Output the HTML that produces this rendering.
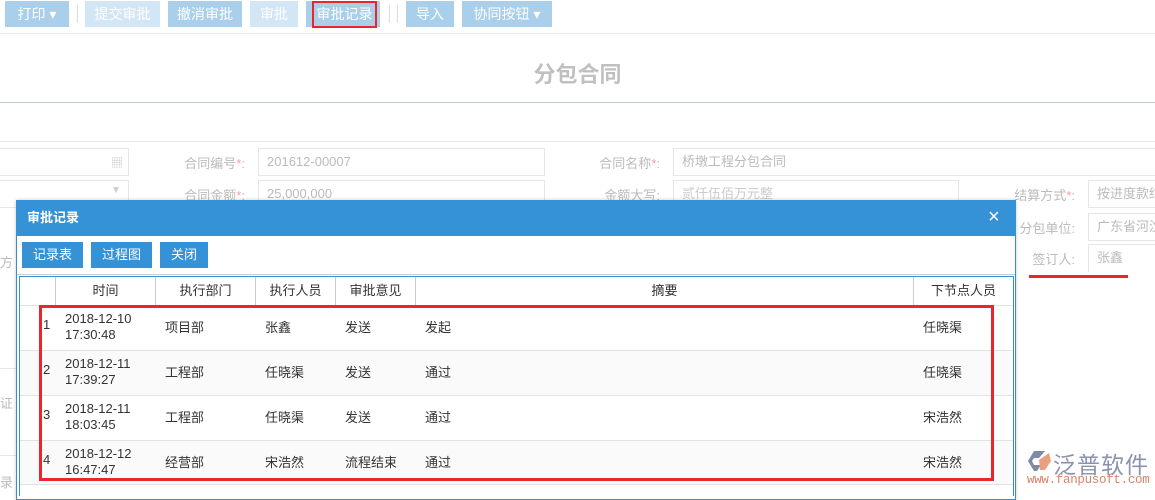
<!DOCTYPE html>
<html><head><meta charset="utf-8"><style>
*{box-sizing:border-box;margin:0;padding:0}
body{width:1155px;height:494px;overflow:hidden;background:#fff;font-family:"Liberation Sans","Noto Sans CJK SC",sans-serif;font-size:13px;color:#333;position:relative}
.a{position:absolute}
.tb{position:absolute;top:1px;height:26px;line-height:26px;color:#fff;font-size:14px;text-align:center}
.inp{position:absolute;border:1px solid #e6e6e6;height:28px;line-height:26px;padding-left:8px;color:#bbb;font-size:13px}
.lbl{position:absolute;color:#bbb;font-size:13px;text-align:right}
.lbl i{color:#f3a0a0;font-style:normal}
.btn{position:absolute;top:242px;height:26px;line-height:26px;background:#3592d6;color:#fff;text-align:center;font-size:13px}
.th{position:absolute;top:277px;height:28px;line-height:28px;text-align:center;border-left:1px solid #ccc;color:#333}
.row{position:absolute;left:20px;width:993px;height:45px;border-top:1px solid #e2e2e2}
.c{position:absolute;font-size:13px;color:#333}
</style></head><body>
<div class="tb" style="left:5px;width:64px;background:#a9cfea">打印 ▾</div>
<div class="a" style="left:77px;top:5px;width:1px;height:18px;background:#ddd"></div>
<div class="tb" style="left:85px;width:75px;background:#d3e6f5">提交审批</div>
<div class="tb" style="left:168px;width:74px;background:#a9cfea">撤消审批</div>
<div class="tb" style="left:250px;width:48px;background:#d3e6f5">审批</div>
<div class="tb" style="left:306px;width:74px;background:#a9cfea"></div>
<div class="a" style="left:312px;top:1px;width:65px;height:27px;border:2px solid #e8262b;color:#fff;text-align:center;line-height:23px;font-size:14px">审批记录</div>
<div class="a" style="left:389px;top:5px;width:1px;height:18px;background:#ddd"></div>
<div class="a" style="left:397px;top:5px;width:1px;height:18px;background:#ddd"></div>
<div class="tb" style="left:406px;width:48px;background:#a9cfea">导入</div>
<div class="tb" style="left:462px;width:90px;background:#a9cfea">协同按钮 ▾</div>
<div class="a" style="left:0;top:33px;width:1155px;height:1px;background:#e8e8e8"></div>
<div class="a" style="left:0;top:57px;width:1155px;text-align:center;font-size:22px;font-weight:bold;color:#c0c0c0">分包合同</div>
<div class="a" style="left:0;top:102px;width:1155px;height:1px;background:#b5cde0"></div>
<div class="a" style="left:0;top:141px;width:1155px;height:1px;background:#e8e8e8"></div>
<div class="inp" style="left:-2px;top:148px;width:131px"></div>
<div class="a" style="left:111px;top:154px;color:#ccc;font-size:12px">▦</div>
<div class="inp" style="left:-2px;top:180px;width:131px"></div>
<div class="a" style="left:111px;top:185px;color:#ccc;font-size:10px">▼</div>
<div class="lbl" style="left:150px;top:153px;width:95px">合同编号<i>*</i>:</div>
<div class="inp" style="left:258px;top:148px;width:287px">201612-00007</div>
<div class="lbl" style="left:150px;top:185px;width:95px">合同金额<i>*</i>:</div>
<div class="inp" style="left:258px;top:180px;width:287px">25,000,000</div>
<div class="lbl" style="left:565px;top:153px;width:95px">合同名称<i>*</i>:</div>
<div class="inp" style="left:673px;top:148px;width:500px">桥墩工程分包合同</div>
<div class="lbl" style="left:565px;top:185px;width:95px">金额大写:</div>
<div class="inp" style="left:673px;top:180px;width:286px;color:#ccc">贰仟伍佰万元整</div>
<div class="lbl" style="left:980px;top:185px;width:95px">结算方式<i>*</i>:</div>
<div class="inp" style="left:1088px;top:180px;width:80px">按进度款结</div>
<div class="lbl" style="left:980px;top:218px;width:95px">分包单位:</div>
<div class="inp" style="left:1088px;top:213px;width:80px">广东省河汶</div>
<div class="lbl" style="left:980px;top:249px;width:95px">签订人:</div>
<div class="inp" style="left:1088px;top:244px;width:80px;border-bottom:none">张鑫</div>
<div class="a" style="left:1029px;top:275px;width:99px;height:3px;background:#e8262b"></div>
<div class="a" style="left:0;top:252px;color:#bbb">方</div>
<div class="a" style="left:0;top:393px;color:#bbb">证</div>
<div class="a" style="left:0;top:472px;color:#bbb">录</div>
<div class="a" style="left:0;top:368px;width:16px;height:1px;background:#e6e6e6"></div>
<div class="a" style="left:0;top:455px;width:16px;height:1px;background:#e6e6e6"></div>
<svg class="a" style="left:1025px;top:448px" width="28" height="26" viewBox="0 0 28 26"><path d="M3 13 L9 3 L20 3 L14 10 L9 10 L7 13 L9 17 L16 17 L12 23 L9 23 Z" fill="#7f8aa8"/><path d="M14 12 L24 5 L26 13 L20 22 L15 22 Z" fill="#e8a080"/></svg>
<div class="a" style="left:1053px;top:446px;font-size:23px;color:#8a92ad;letter-spacing:1px">泛普软件</div>
<div class="a" style="left:1027px;top:473px;font-size:12.5px;color:#d9826a;font-family:'Liberation Mono',monospace;letter-spacing:-0.3px">www.fanpusoft.com</div>
<div class="a" style="left:16px;top:200px;width:1000px;height:300px;border:1px solid #3a8ccd;background:#fff;box-shadow:0 0 4px rgba(0,0,0,.2)"></div>
<div class="a" style="left:16px;top:200px;width:1000px;height:36px;background:#3592d6;color:#fff;font-weight:bold;font-size:13px;line-height:35px;padding-left:11px">审批记录</div>
<div class="a" style="left:988px;top:206px;color:#fff;font-size:20px">×</div>
<div class="btn" style="left:22px;width:61px">记录表</div>
<div class="btn" style="left:91px;width:61px">过程图</div>
<div class="btn" style="left:160px;width:48px">关闭</div>
<div class="a" style="left:17px;top:274px;width:998px;height:1px;background:#ccc"></div>
<div class="a" style="left:19px;top:276px;width:995px;height:220px;border:1px solid #3a8ccd;border-bottom:none"></div>
<div class="th" style="left:55px;width:100px">时间</div>
<div class="th" style="left:155px;width:100px">执行部门</div>
<div class="th" style="left:255px;width:80px">执行人员</div>
<div class="th" style="left:335px;width:80px">审批意见</div>
<div class="th" style="left:415px;width:498px">摘要</div>
<div class="th" style="left:913px;width:100px">下节点人员</div>
<div class="row" style="top:305px;background:#fff"></div>
<div class="row" style="top:350px;background:#fafafa"></div>
<div class="row" style="top:395px;background:#fff"></div>
<div class="row" style="top:440px;background:#fafafa;border-bottom:1px solid #e2e2e2"></div>
<div class="c" style="left:43px;top:317px">1</div><div class="c" style="left:65px;top:311px;line-height:16px">2018-12-10<br>17:30:48</div><div class="c" style="left:165px;top:317px">项目部</div><div class="c" style="left:265px;top:317px">张鑫</div><div class="c" style="left:345px;top:317px">发送</div><div class="c" style="left:425px;top:317px">发起</div><div class="c" style="left:923px;top:317px">任晓渠</div>
<div class="c" style="left:43px;top:362px">2</div><div class="c" style="left:65px;top:356px;line-height:16px">2018-12-11<br>17:39:27</div><div class="c" style="left:165px;top:362px">工程部</div><div class="c" style="left:265px;top:362px">任晓渠</div><div class="c" style="left:345px;top:362px">发送</div><div class="c" style="left:425px;top:362px">通过</div><div class="c" style="left:923px;top:362px">任晓渠</div>
<div class="c" style="left:43px;top:407px">3</div><div class="c" style="left:65px;top:401px;line-height:16px">2018-12-11<br>18:03:45</div><div class="c" style="left:165px;top:407px">工程部</div><div class="c" style="left:265px;top:407px">任晓渠</div><div class="c" style="left:345px;top:407px">发送</div><div class="c" style="left:425px;top:407px">通过</div><div class="c" style="left:923px;top:407px">宋浩然</div>
<div class="c" style="left:43px;top:452px">4</div><div class="c" style="left:65px;top:446px;line-height:16px">2018-12-12<br>16:47:47</div><div class="c" style="left:165px;top:452px">经营部</div><div class="c" style="left:265px;top:452px">宋浩然</div><div class="c" style="left:345px;top:452px">流程结束</div><div class="c" style="left:425px;top:452px">通过</div><div class="c" style="left:923px;top:452px">宋浩然</div>
<div class="a" style="left:39px;top:305px;width:955px;height:176px;border:3px solid #e8262b"></div>
</body></html>
